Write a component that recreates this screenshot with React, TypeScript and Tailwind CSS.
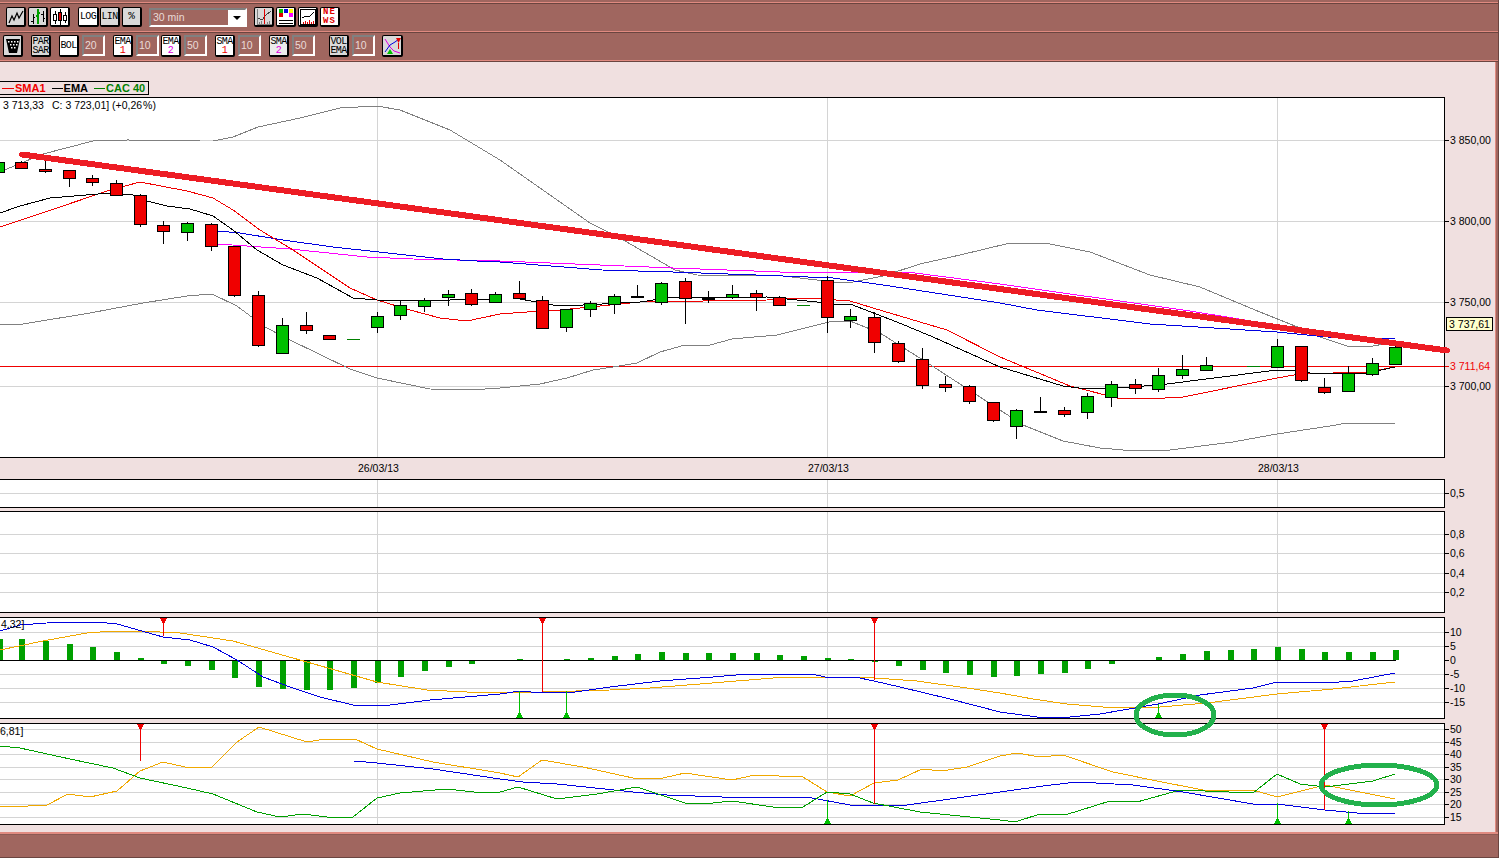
import React from "react";

type P = [number, number];
const pts = (a: P[]) => a.map(([x, y]) => `${x},${y}`).join(" ");

type C = [number, number, number, number, number, "r" | "g" | "k" | "d"];
const candles: C[] = [
  [-2, 162, 172, 162, 172, "g"], [21, 161, 168, 162, 168, "r"], [45, 160, 173, 169, 171, "r"], [69, 170, 187, 170, 178, "r"],
  [92, 175, 186, 178, 182, "r"], [116, 180, 195, 183, 195, "r"], [140, 194, 227, 195, 224, "r"], [163, 221, 244, 225, 231, "r"],
  [187, 222, 241, 223, 232, "g"], [211, 223, 251, 224, 246, "r"], [234, 246, 297, 246, 295, "r"], [258, 291, 347, 295, 345, "r"],
  [282, 318, 353, 325, 353, "g"], [306, 312, 334, 325, 330, "r"], [329, 335, 339, 335, 339, "r"], [353, 339, 339, 339, 339, "d"],
  [377, 312, 333, 316, 327, "g"], [400, 301, 320, 305, 315, "g"], [424, 298, 312, 300, 306, "g"], [448, 290, 306, 294, 297, "g"],
  [471, 289, 306, 293, 304, "r"], [495, 292, 302, 294, 302, "g"], [519, 281, 298, 293, 298, "r"], [542, 296, 328, 300, 328, "r"],
  [566, 309, 332, 309, 327, "g"], [590, 301, 317, 303, 309, "g"], [614, 294, 314, 296, 304, "g"], [637, 285, 298, 296, 296, "k"],
  [661, 282, 305, 283, 302, "g"], [685, 278, 324, 281, 298, "r"], [708, 291, 303, 298, 298, "k"], [732, 285, 299, 294, 297, "g"],
  [756, 290, 311, 293, 297, "r"], [779, 296, 305, 297, 305, "r"], [803, 305, 305, 305, 305, "d"], [827, 276, 333, 280, 317, "r"],
  [850, 309, 328, 316, 320, "g"], [874, 312, 353, 317, 342, "r"], [898, 341, 363, 343, 361, "r"], [922, 348, 389, 359, 385, "r"],
  [945, 376, 392, 384, 387, "r"], [969, 385, 404, 386, 401, "r"], [993, 402, 422, 402, 420, "r"], [1016, 409, 439, 410, 426, "g"],
  [1040, 397, 411, 411, 411, "k"], [1064, 407, 417, 410, 414, "r"], [1087, 393, 419, 396, 412, "g"], [1111, 381, 407, 384, 397, "g"],
  [1135, 379, 394, 384, 388, "r"], [1158, 368, 392, 375, 389, "g"], [1182, 355, 379, 369, 375, "g"], [1206, 357, 370, 365, 370, "g"],
  [1253, 366, 366, 366, 366, "d"], [1277, 339, 367, 346, 367, "g"], [1301, 346, 382, 346, 380, "r"], [1324, 378, 394, 387, 392, "r"],
  [1348, 366, 391, 373, 391, "g"], [1372, 358, 376, 363, 374, "g"], [1395, 346, 364, 347, 364, "g"],
];

const bollUp: P[] = [[0,172],[7,169],[43,154],[93,141],[128,140],[200,141],[213,141],[233,137],[258,127],[300,118],[340,108],[377,106],[400,110],[450,130],[500,160],[590,223],[620,238],[675,270],[697,275],[783,276],[800,278],[833,282],[853,282],[883,276],[920,264],[960,255],[1010,243],[1045,243],[1090,252],[1150,275],[1200,287],[1255,310],[1300,328],[1320,337],[1347,346],[1373,346],[1395,342]];
const bollLo: P[] = [[0,325],[23,324],[90,313],[143,303],[187,296],[212,294],[237,306],[265,327],[290,340],[350,369],[377,378],[430,389],[470,390],[500,388],[540,384],[567,378],[593,370],[613,367],[637,363],[660,352],[685,345],[710,345],[732,339],[777,335],[833,321],[850,321],[880,333],[923,360],[963,386],[1000,410],[1023,425],[1063,441],[1100,448],[1123,450],[1170,450],[1233,442],[1277,434],[1330,426],[1347,423],[1383,423],[1395,424]];
const ema: P[] = [[0,213],[20,206],[50,198],[110,193],[133,195],[147,201],[167,206],[190,209],[213,216],[233,230],[257,250],[283,265],[317,278],[353,298],[377,300],[420,301],[450,300],[500,299],[520,299],[553,305],[583,305],[640,302],[667,298],[767,297],[817,302],[833,304],[850,304],[897,322],[933,337],[1000,367],[1063,386],[1087,389],[1133,387],[1167,384],[1277,370],[1290,370],[1317,374],[1367,373],[1395,367]];
const sma: P[] = [[0,227],[45,212],[110,190],[140,182],[187,191],[213,198],[233,210],[260,230],[293,250],[350,288],[377,300],[410,310],[440,318],[467,321],[500,314],[527,312],[560,310],[640,302],[767,300],[790,298],[807,298],[850,301],[883,311],[947,330],[1000,357],[1070,386],[1117,398],[1147,399],[1183,397],[1277,378],[1300,374],[1367,372],[1395,367]];
const blue: P[] = [[218,231],[240,233],[283,240],[333,247],[443,259],[477,261],[500,262],[602,270],[673,272],[783,276],[833,278],[883,285],[1000,303],[1037,310],[1150,324],[1277,332],[1327,337],[1367,338],[1395,339]];
const magenta: P[] = [[218,244],[290,249],[367,257],[413,259],[500,261],[600,265],[673,268],[780,272],[850,272],[907,272],[1000,284],[1190,311],[1300,329],[1395,342]];

const bars: P[] = [[0,639],[22,639],[46,641],[70,644],[93,647],[117,652],[141,658],[164,664],[188,666],[212,670],[235,678],[259,687],[283,689],[307,690],[330,690],[354,688],[378,683],[401,677],[425,671],[449,667],[472,664],[520,659],[567,659],[591,658],[615,656],[638,654],[662,652],[686,653],[709,653],[733,653],[757,653],[780,655],[804,656],[828,658],[851,659],[875,662],[899,666],[923,670],[946,673],[970,675],[994,677],[1017,676],[1041,674],[1065,673],[1088,669],[1112,664],[1159,657],[1183,654],[1207,651],[1231,650],[1254,649],[1278,647],[1302,649],[1325,652],[1349,652],[1373,652],[1396,650]];
const macdBlue: P[] = [[0,631],[20,625],[60,622],[97,622],[117,624],[163,637],[190,640],[213,647],[237,660],[263,677],[290,687],[320,697],[353,705],[390,705],[430,700],[500,694],[520,691],[542,693],[575,692],[610,687],[660,681],[713,677],[747,674],[812,674],[825,677],[855,677],[874,681],[900,687],[950,699],[1000,712],[1037,717],[1070,717],[1100,714],[1158,704],[1200,695],[1253,688],[1277,682],[1315,682],[1325,683],[1353,681],[1395,673]];
const macdOr: P[] = [[0,650],[43,641],[87,633],[113,631],[140,631],[180,633],[233,641],[300,660],[377,682],[427,690],[467,692],[513,692],[542,692],[610,690],[650,688],[700,684],[773,678],[792,677],[855,677],[875,678],[917,681],[967,688],[1000,693],[1033,699],[1067,704],[1103,707],[1160,707],[1207,703],[1277,694],[1333,689],[1395,682]];
const dmOr: P[] = [[0,806],[10,807],[47,805],[68,794],[90,797],[117,791],[140,771],[163,762],[185,767],[212,767],[237,742],[259,727],[307,742],[325,739],[355,739],[377,749],[433,762],[500,773],[518,777],[542,760],[583,767],[633,778],[663,778],[685,773],[732,780],[755,775],[803,777],[827,792],[850,796],[874,783],[898,780],[922,769],[942,771],[967,767],[1000,756],[1017,753],[1040,757],[1063,755],[1113,772],[1157,781],[1203,790],[1253,790],[1277,797],[1325,785],[1395,799]];
const dmGr: P[] = [[0,746],[20,748],[70,759],[113,768],[140,778],[187,788],[213,794],[257,812],[280,817],[303,814],[327,817],[353,817],[377,798],[400,793],[447,789],[483,793],[500,792],[518,787],[557,799],[597,794],[637,787],[685,803],[703,804],[732,801],[773,807],[803,807],[827,792],[850,794],[873,803],[920,812],[1000,820],[1015,822],[1040,814],[1065,815],[1110,801],[1137,802],[1180,790],[1253,793],[1277,774],[1300,784],[1325,787],[1373,781],[1395,774]];
const dmBl: P[] = [[354,761],[377,763],[433,769],[500,779],[523,782],[557,784],[633,792],[667,795],[722,797],[807,797],[850,805],[907,805],[1000,792],[1043,786],[1077,782],[1133,785],[1183,792],[1253,804],[1277,804],[1325,810],[1367,814],[1395,813]];

const GRID = "#d4d4d4";
const Line = ({ d, c }: { d: P[]; c: string }) => <polyline points={pts(d)} fill="none" stroke={c} strokeWidth={1} shapeRendering="crispEdges" />;

const Vert = ({ y1, y2 }: { y1: number; y2: number }) => (
  <>
    {[377, 827, 1277].map((x) => <line key={x} x1={x + 0.5} x2={x + 0.5} y1={y1} y2={y2} stroke={GRID} shapeRendering="crispEdges" />)}
  </>
);
const HGrid = ({ ys }: { ys: number[] }) => (
  <>
    {ys.map((y) => <line key={y} x1={0} x2={1445} y1={y + 0.5} y2={y + 0.5} stroke={GRID} shapeRendering="crispEdges" />)}
  </>
);

const Down = ({ x, y1, y2 }: { x: number; y1: number; y2: number }) => (
  <g shapeRendering="crispEdges">
    <line x1={x + 0.5} x2={x + 0.5} y1={y1} y2={y2} stroke="#f00000" />
    <polygon points={`${x - 3},${y1} ${x + 4},${y1} ${x + 0.5},${y1 + 7}`} fill="#f00000" />
  </g>
);
const Up = ({ x, y1, y2 }: { x: number; y1: number; y2: number }) => (
  <g shapeRendering="crispEdges">
    <line x1={x + 0.5} x2={x + 0.5} y1={y1} y2={y2} stroke="#00c000" />
    <polygon points={`${x - 3},${y2} ${x + 4},${y2} ${x + 0.5},${y2 - 7}`} fill="#00c000" />
  </g>
);

function Panel({ top, h, ticks, children, tick0 }: { top: number; h: number; ticks: [number, string, string?][]; children?: React.ReactNode; tick0?: React.ReactNode }) {
  return (
    <div className="flex relative" style={{ height: h }}>
      <div className="w-[1445px] border-y border-r border-black bg-white overflow-hidden">
        <svg width={1444} height={h - 2} viewBox={`0 ${top + 1} 1444 ${h - 2}`} className="block">{children}</svg>
      </div>
      <svg width={50} height={h} viewBox={`1445 ${top} 50 ${h}`} className="block">
        {ticks.map(([y, t, c]) => (
          <g key={t}>
            <line x1={1445} x2={1449} y1={y + 0.5} y2={y + 0.5} stroke={c || "#000"} shapeRendering="crispEdges" />
            <text x={1450} y={y + 3.5} fill={c || "#000"} className="text-[10.5px]">{t}</text>
          </g>
        ))}
      </svg>
      {tick0}
    </div>
  );
}

const btn = "flex items-center justify-center border border-black border-r-2 border-b-2 rounded-[2px] leading-[9px] overflow-hidden shrink-0 font-['Liberation_Mono',monospace]";
const label = "text-[10px] tracking-[-0.6px]";
const white = "bg-white";
const gray = "bg-[#d9d9d9]";

const Num = ({ v, cls }: { v: string; cls: string }) => (
  <div className={`w-[23px] h-[21px] border-2 border-t-[#808080] border-l-[#808080] border-b-white border-r-white bg-[#a0665f] text-[#eadbd8] text-[10.5px] leading-[17px] pl-[1px] ${cls}`}>{v}</div>
);
const Two = ({ a, b, c, bg, cls }: { a: string; b: string; c?: string; bg: string; cls: string }) => (
  <div className={`${btn} ${bg} w-[20px] h-[22px] flex-col ${label} ${cls}`}>
    <span>{a}</span>
    <span className={c || ""}>{b}</span>
  </div>
);
const Sep = () => (
  <>
    <div className="h-px bg-[#e08a80] shrink-0" />
    <div className="h-px bg-[#6b4540] shrink-0" />
  </>
);

export default function App() {
  return (
    <div className="relative w-[1499px] h-[858px] overflow-hidden bg-[#a0665f] text-black border-r border-[#6b4540] font-['Liberation_Sans',Arial,sans-serif] flex flex-col">
      {/* toolbars */}
      <div className="h-[62px] shrink-0 flex flex-col">
        <div className="h-[2px] shrink-0" />
        <Sep />
        <div className="flex items-start pl-[6px] pt-[3px] h-[27px] shrink-0">
          <div className={`${btn} ${gray} w-[20px] h-[20px]`}>
            <svg width="16" height="14" viewBox="0 0 16 14"><polyline points="1,13 4,6 6,10 9,3 11,8 15,1" fill="none" stroke="#000" strokeWidth="1.2" /></svg>
          </div>
          <div className={`${btn} ${gray} w-[20px] h-[20px] ml-[2px]`}>
            <svg width="16" height="16" viewBox="0 0 16 16" shapeRendering="crispEdges"><path d="M3 5v10M1 12h2M3 8h2M13 2v11M11 5h2M13 9h2" stroke="#000" fill="none" /><path d="M8 0v15M6 7h2M8 4h2" stroke="#00a000" strokeWidth="1.5" fill="none" /></svg>
          </div>
          <div className={`${btn} ${white} w-[20px] h-[20px] ml-[2px]`}>
            <svg width="16" height="16" viewBox="0 0 16 16" shapeRendering="crispEdges"><path d="M3 2v13M13 3v11" stroke="#000" fill="none" /><rect x="1.5" y="5.5" width="3" height="6" fill="#fff" stroke="#000" /><rect x="11.5" y="6.5" width="3" height="5" fill="#fff" stroke="#000" /><path d="M8 0v16" stroke="#000" /><rect x="6.5" y="3.5" width="3" height="8" fill="#e00000" stroke="#000" /></svg>
          </div>
          <div className={`${btn} ${white} w-[21px] h-[20px] ml-[8px] ${label}`}>LOG</div>
          <div className={`${btn} ${gray} w-[20px] h-[20px] ml-[1px] ${label}`}>LIN</div>
          <div className={`${btn} ${gray} w-[20px] h-[20px] ml-[2px] text-[11px]`}>%</div>
          <div className="ml-[7px] w-[98px] h-[19px] mt-[1px] border-2 border-t-[#808080] border-l-[#808080] border-b-white border-r-white flex">
            <div className="flex-1 bg-[#a0665f] text-[#eadbd8] text-[10.5px] leading-[15px] pl-[2px]">30 min</div>
            <div className="w-[17px] bg-white flex items-center justify-center">
              <div className="w-0 h-0 border-x-[4px] border-x-transparent border-t-[4px] border-t-black" />
            </div>
          </div>
          <div className={`${btn} ${gray} w-[20px] h-[20px] ml-[7px]`}>
            <svg width="16" height="16" viewBox="0 0 16 16" shapeRendering="crispEdges"><path d="M1 0v15h15" stroke="#808080" fill="none" /><polyline points="2,9 6,11 10,6 15,2" fill="none" stroke="#404040" /><path d="M8 0v15" stroke="#e00000" /><path d="M3 13v2M5 12v3M11 13v2M13 12v3" stroke="#808080" /></svg>
          </div>
          <div className={`${btn} ${white} w-[20px] h-[20px] ml-[2px]`}>
            <svg width="16" height="16" viewBox="0 0 16 16" shapeRendering="crispEdges"><rect x="1" y="0" width="4" height="4" fill="#00c000" /><rect x="6" y="0" width="4" height="4" fill="#0000e0" /><rect x="11" y="0" width="4" height="4" fill="#ffff00" /><rect x="1" y="4" width="4" height="4" fill="#e00000" /><rect x="11" y="4" width="4" height="4" fill="#ff00ff" /><path d="M1 11h14M1 14h14" stroke="#000" /></svg>
          </div>
          <div className={`${btn} ${white} w-[20px] h-[20px] ml-[2px]`}>
            <svg width="16" height="16" viewBox="0 0 16 16" shapeRendering="crispEdges"><rect x="0.5" y="0.5" width="15" height="15" fill="#fff" stroke="#000" /><polyline points="2,9 6,7 9,8 14,3" fill="none" stroke="#000" /><path d="M3 13v2M5 12v3M7 13v2M9 11v4M11 13v2M13 12v3" stroke="#e00000" /></svg>
          </div>
          <div className={`${btn} ${white} w-[20px] h-[20px] ml-[2px] flex-col text-[9px] font-bold text-[#e00000] tracking-[1px]`}>
            <span>NE</span>
            <span>WS</span>
          </div>
        </div>
        <Sep />
        <div className="flex items-start pl-[3px] pt-[2px] flex-1">
          <div className={`${btn} ${gray} w-[20px] h-[22px]`}>
            <svg width="14" height="16" viewBox="0 0 14 16"><polygon points="0,1 14,1 11,15 3,15" fill="#000" /><g fill="#fff"><rect x="2" y="3" width="1.5" height="1.5" /><rect x="5" y="3" width="1.5" height="1.5" /><rect x="8" y="3" width="1.5" height="1.5" /><rect x="11" y="3" width="1.5" height="1.5" /><rect x="4" y="6" width="1.5" height="1.5" /><rect x="7" y="6" width="1.5" height="1.5" /><rect x="10" y="6" width="1.5" height="1.5" /><rect x="5" y="9" width="1.5" height="1.5" /><rect x="8" y="9" width="1.5" height="1.5" /></g></svg>
          </div>
          <Two a="PAR" b="SAR" bg={gray} cls="ml-[8px]" />
          <div className={`${btn} ${white} w-[20px] h-[22px] ml-[8px] ${label}`}>BOL</div>
          <Num v="20" cls="ml-[3px]" />
          <Two a="EMA" b="1" c="text-[#f00000]" bg={white} cls="ml-[8px]" />
          <Num v="10" cls="ml-[3px]" />
          <Two a="EMA" b="2" c="text-[#e000e0]" bg={white} cls="ml-[2px]" />
          <Num v="50" cls="ml-[3px]" />
          <Two a="SMA" b="1" c="text-[#f00000]" bg={white} cls="ml-[8px]" />
          <Num v="10" cls="ml-[3px]" />
          <Two a="SMA" b="2" c="text-[#e000e0]" bg="bg-[#ececec]" cls="ml-[8px]" />
          <Num v="50" cls="ml-[3px]" />
          <Two a="VOL" b="EMA" bg={gray} cls="ml-[14px]" />
          <Num v="10" cls="ml-[3px]" />
          <div className={`${btn} ${gray} w-[21px] h-[22px] ml-[7px]`}>
            <svg width="17" height="18" viewBox="0 0 17 18"><polyline points="1,2 6,10 10,14 16,16" fill="none" stroke="#e000e0" /><polyline points="1,15 6,8 11,5 15,2" fill="none" stroke="#0000e0" /><path d="M12 1h5l-2.5 5z" fill="#e00000" /><path d="M14.5 6v6" stroke="#e00000" /><path d="M3 17h6l-3-5z" fill="#00c000" /></svg>
          </div>
        </div>
        <Sep />
      </div>

      {/* body */}
      <div className="flex-1 mr-[2px] bg-[#f0e0e0] border-r border-[#e08a80] flex flex-col">
        <div className="mt-[19px] h-[14px] w-[149px] border border-l-0 border-black flex items-center text-[11px] font-bold leading-none whitespace-nowrap shrink-0">
          <span className="w-[12px] h-px bg-[#f00000] ml-[2px] mr-[1px]" />
          <span className="text-[#f00000]">SMA1</span>
          <span className="w-[11px] h-px bg-black ml-[6px] mr-[1px]" />
          <span className="text-black">EMA</span>
          <span className="w-[11px] h-px bg-[#008000] ml-[6px] mr-[1px]" />
          <span className="text-[#008000]">CAC 40</span>
        </div>

        <div className="mt-[2px]">
          <Panel
            top={97}
            h={361}
            ticks={[[140, "3 850,00"], [221, "3 800,00"], [302, "3 750,00"], [366, "3 711,64", "#f00000"], [386, "3 700,00"]]}
            tick0={<div className="absolute left-[1446px] top-[220px] w-[47px] h-[14px] bg-[#ffffcc] border border-black text-[10.5px] leading-[12px] text-center text-black">3 737,61</div>}
          >
            <HGrid ys={[140, 221, 302, 386]} />
            <Vert y1={97} y2={458} />
            <line x1={0} x2={1445} y1={366.5} y2={366.5} stroke="#f00000" shapeRendering="crispEdges" />
            <Line d={bollUp} c="#808080" />
            <Line d={bollLo} c="#808080" />
            <Line d={magenta} c="#ff00ff" />
            <Line d={blue} c="#0000e0" />
            <Line d={sma} c="#f00000" />
            <Line d={ema} c="#000" />
            <g shapeRendering="crispEdges">
              {candles.map(([x, wt, wb, bt, bb, k]) => {
                if (k === "d") return <line key={x} x1={x - 6} x2={x + 7} y1={bt + 0.5} y2={bt + 0.5} stroke="#008000" />;
                if (k === "k")
                  return (
                    <g key={x}>
                      <line x1={x + 0.5} x2={x + 0.5} y1={wt} y2={wb} stroke="#000" />
                      <rect x={x - 6} y={bt} width={13} height={2} fill="#000" />
                    </g>
                  );
                return (
                  <g key={x}>
                    <line x1={x + 0.5} x2={x + 0.5} y1={wt} y2={wb} stroke="#000" />
                    <rect x={x - 5.5} y={bt + 0.5} width={12} height={bb - bt} fill={k === "r" ? "#f00000" : "#00c000"} stroke="#000" />
                  </g>
                );
              })}
            </g>
            <text x={3} y={109} className="text-[10.5px]" fill="#000">3 713,33</text>
            <text x={52} y={109} className="text-[10.5px]" fill="#000">{"C: 3 723,01] (+0,26\u200a%)"}</text>
          </Panel>
        </div>

        <div className="h-[21px] pl-[358px] flex gap-[409px] text-[10.5px] leading-[20px] text-black shrink-0">
          <span className="w-[41px] whitespace-nowrap">26/03/13</span>
          <span className="w-[41px] whitespace-nowrap">27/03/13</span>
          <span className="w-[41px] whitespace-nowrap">28/03/13</span>
        </div>

        <Panel top={479} h={29} ticks={[[493, "0,5"]]}>
          <HGrid ys={[493]} />
          <Vert y1={479} y2={508} />
        </Panel>

        <div className="mt-[3px]">
          <Panel top={511} h={102} ticks={[[534, "0,8"], [553, "0,6"], [573, "0,4"], [592, "0,2"]]}>
            <HGrid ys={[534, 553, 573, 592]} />
            <Vert y1={511} y2={613} />
          </Panel>
        </div>

        <div className="mt-[4px]">
          <Panel top={617} h={102} ticks={[[632, "10"], [646, "5"], [660, "0"], [674, "-5"], [688, "-10"], [702, "-15"]]}>
            <HGrid ys={[632, 646, 674, 688, 702]} />
            <Vert y1={617} y2={719} />
            <g shapeRendering="crispEdges">
              {bars.map(([x, y]) => (
                <rect key={x} x={x - 3} y={Math.min(y, 660)} width={6} height={Math.abs(y - 660)} fill="#00a000" />
              ))}
              <line x1={0} x2={1396} y1={660.5} y2={660.5} stroke="#000" />
            </g>
            <Line d={macdOr} c="#f0a800" />
            <Line d={macdBlue} c="#0000e0" />
            <Down x={163} y1={618} y2={636} />
            <Down x={542} y1={618} y2={692} />
            <Down x={874} y1={618} y2={680} />
            <Up x={519} y1={691} y2={718} />
            <Up x={566} y1={691} y2={718} />
            <Up x={1158} y1={704} y2={718} />
            <text x={1} y={628} className="text-[10.5px]" fill="#000">4,32]</text>
          </Panel>
        </div>

        <div className="mt-[4px]">
          <Panel top={723} h={102} ticks={[[729, "50"], [742, "45"], [754, "40"], [767, "35"], [779, "30"], [792, "25"], [804, "20"], [817, "15"]]}>
            <HGrid ys={[729, 742, 754, 767, 779, 792, 804, 817]} />
            <Vert y1={723} y2={825} />
            <Line d={dmOr} c="#f0a800" />
            <Line d={dmBl} c="#0000e0" />
            <Line d={dmGr} c="#00a000" />
            <Down x={140} y1={724} y2={761} />
            <Down x={874} y1={724} y2={804} />
            <Down x={1324} y1={724} y2={810} />
            <Up x={827} y1={800} y2={824} />
            <Up x={1277} y1={803} y2={824} />
            <Up x={1348} y1={811} y2={824} />
            <text x={0} y={735} className="text-[10.5px]" fill="#000">6,81]</text>
          </Panel>
        </div>
      </div>

      {/* bottom bar */}
      <div className="h-[26px] shrink-0 border-b border-[#6b4540]">
        <div className="h-[2px] bg-[#e08a80]" />
        <div className="h-px bg-[#8c5a54]" />
      </div>

      {/* hand-drawn annotations over the chart */}
      <svg width={1499} height={858} viewBox="0 0 1499 858" className="absolute left-0 top-0 pointer-events-none">
        <line x1={22} y1={154.5} x2={1447} y2={350.5} stroke="#ed1c24" strokeWidth={6} strokeLinecap="round" shapeRendering="crispEdges" />
        <ellipse cx={1175} cy={715} rx={39} ry={20} fill="none" stroke="#22b14c" strokeWidth={5} shapeRendering="crispEdges" />
        <ellipse cx={1379} cy={785} rx={58} ry={20} fill="none" stroke="#22b14c" strokeWidth={5} shapeRendering="crispEdges" />
      </svg>
    </div>
  );
}
